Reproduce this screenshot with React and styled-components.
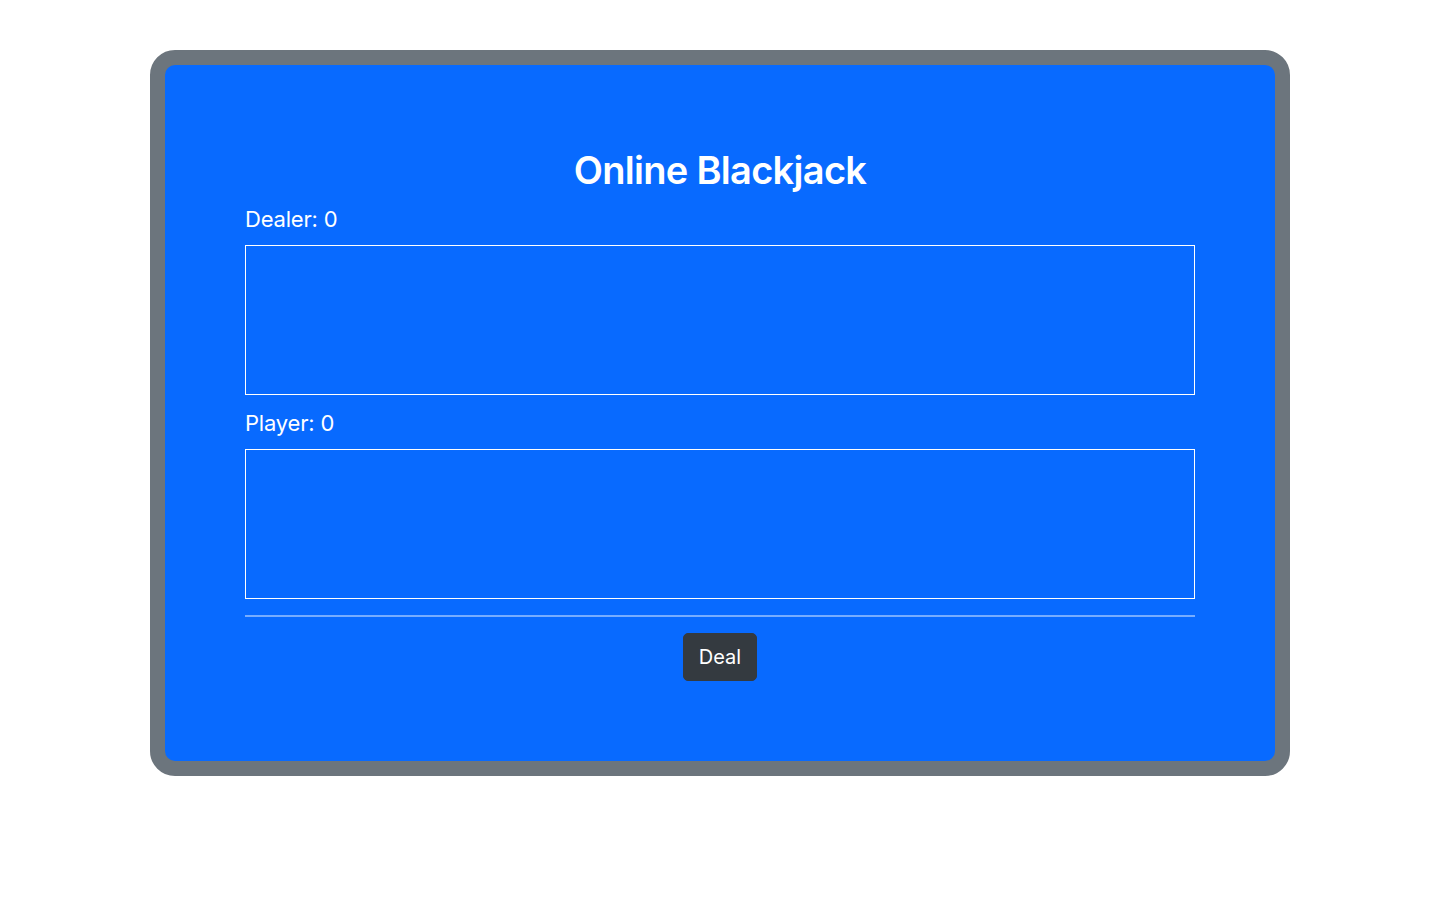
import styled, { createGlobalStyle } from "styled-components";

const GlobalStyle = createGlobalStyle`
  body {
    margin: 0;
    background: #fff;
    font-family: Inter, "Noto Sans", "Liberation Sans", sans-serif;
    color: #fff;
  }
  * {
    box-sizing: border-box;
  }
`;

const Page = styled.div`
  display: flex;
  justify-content: center;
  padding-top: 50px;
`;

const Table = styled.div`
  width: 1140px;
  background-color: #086aff;
  border: 15px solid #6c757d;
  border-radius: 25px;
  padding: 80px;
  display: flex;
  flex-direction: column;
`;

const Title = styled.h1`
  margin: 0 0 6px;
  font-size: 38px;
  line-height: 50px;
  font-weight: 600;
  letter-spacing: -0.7px;
  text-align: center;
`;

const HandLabel = styled.h4`
  margin: 0 0 8px;
  font-size: 22px;
  line-height: 36px;
  font-weight: 400;
  letter-spacing: -0.2px;
`;

const HandArea = styled.div`
  height: 150px;
  border: 1px solid #fff;
  margin-bottom: 10px;
  display: flex;
  gap: 10px;
  padding: 10px;
`;

const Divider = styled.hr`
  width: 100%;
  margin: 6px 0 16px;
  border: 0;
  height: 2px;
  background: rgba(255, 255, 255, 0.45);
`;

const Actions = styled.div`
  display: flex;
  justify-content: center;
  gap: 8px;
`;

const Button = styled.button`
  font-family: inherit;
  font-size: 20px;
  line-height: 30px;
  padding: 8px 15px;
  color: #fff;
  background-color: #343a40;
  border: 1px solid #343a40;
  border-radius: 5px;
  cursor: pointer;
`;

function Hand({ name, score }) {
  return (
    <>
      <HandLabel>
        {name}: {score}
      </HandLabel>
      <HandArea />
    </>
  );
}

export default function App() {
  return (
    <>
      <GlobalStyle />
      <Page>
        <Table>
          <Title>Online Blackjack</Title>
          <Hand name="Dealer" score={0} />
          <Hand name="Player" score={0} />
          <Divider />
          <Actions>
            <Button>Deal</Button>
          </Actions>
        </Table>
      </Page>
    </>
  );
}
